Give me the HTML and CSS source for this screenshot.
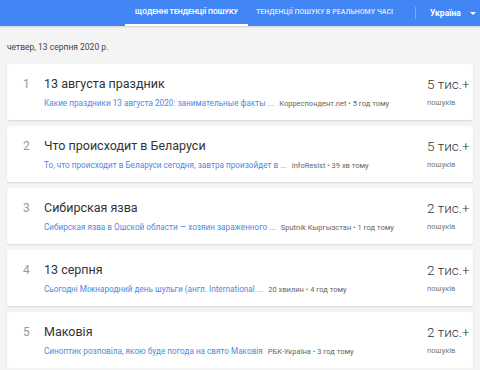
FILE: index.html
```html
<!DOCTYPE html>
<html lang="uk">
<head>
    <meta charset="UTF-8">
    <title>Тенденції пошуку</title>
    <link rel="stylesheet" href="styles.css">
</head>
<body>
    <div class="topbar">
        <div class="tab active">Щоденні тенденції пошуку</div>
        <div class="tab">Тенденції пошуку в реальному часі</div>
        <div class="divider"></div>
        <div class="country">Україна <span class="caret"></span></div>
    </div>

    <div class="date">четвер, 13 серпня 2020 р.</div>

    <div class="list">
        <div class="card">
            <div class="num">1</div>
            <div class="main">
                <div class="title">13 августа праздник</div>
                <div class="snippet"><span class="link">Какие праздники 13 августа 2020: занимательные факты ...</span> <span class="source">Корреспондент.net • 5 год тому</span></div>
            </div>
            <div class="count">
                <div class="value">5 тис.+</div>
                <div class="label">пошуків</div>
            </div>
        </div>
        <div class="card">
            <div class="num">2</div>
            <div class="main">
                <div class="title">Что происходит в Беларуси</div>
                <div class="snippet"><span class="link">То, что происходит в Беларуси сегодня, завтра произойдет в ...</span> <span class="source">InfoResist • 39 хв тому</span></div>
            </div>
            <div class="count">
                <div class="value">5 тис.+</div>
                <div class="label">пошуків</div>
            </div>
        </div>
        <div class="card">
            <div class="num">3</div>
            <div class="main">
                <div class="title">Сибирская язва</div>
                <div class="snippet"><span class="link">Сибирская язва в Ошской области — хозяин зараженного ...</span> <span class="source">Sputnik Кыргызстан • 1 год тому</span></div>
            </div>
            <div class="count">
                <div class="value">2 тис.+</div>
                <div class="label">пошуків</div>
            </div>
        </div>
        <div class="card">
            <div class="num">4</div>
            <div class="main">
                <div class="title">13 серпня</div>
                <div class="snippet"><span class="link">Сьогодні Міжнародний день шульги (англ. International ...</span> <span class="source">20 хвилин • 4 год тому</span></div>
            </div>
            <div class="count">
                <div class="value">2 тис.+</div>
                <div class="label">пошуків</div>
            </div>
        </div>
        <div class="card">
            <div class="num">5</div>
            <div class="main">
                <div class="title">Маковія</div>
                <div class="snippet"><span class="link">Синоптик розповіла, якою буде погода на свято Маковія</span> <span class="source">РБК-Україна • 3 год тому</span></div>
            </div>
            <div class="count">
                <div class="value">2 тис.+</div>
                <div class="label">пошуків</div>
            </div>
        </div>
    </div>
</body>
</html>
```

FILE: styles.css
```css
body {
    margin: 0;
    background: #f4f4f4;
    font-family: Roboto, "Noto Sans", sans-serif;
    color: #333;
}

.topbar {
    height: 26px;
    background: #4285f4;
    display: flex;
    align-items: stretch;
    padding-left: 125px;
    color: #fff;
    box-shadow: 0 1px 2px rgba(0, 0, 0, 0.15);
}

.tab {
    display: flex;
    align-items: center;
    justify-content: center;
    padding: 0 8px;
    font-size: 7px;
    font-weight: 700;
    text-transform: uppercase;
    color: rgba(255, 255, 255, 0.75);
    border-bottom: 2px solid transparent;
    box-sizing: border-box;
}

.tab.active {
    width: 123px;
    color: #fff;
    border-bottom-color: #fff;
}

.divider {
    width: 1px;
    margin: 7px 8px 7px 14px;
    background: rgba(255, 255, 255, 0.3);
}

.country {
    display: flex;
    align-items: center;
    gap: 9px;
    padding-left: 6px;
    font-size: 8.5px;
    font-weight: 700;
}

.caret {
    width: 0;
    height: 0;
    border-left: 3px solid transparent;
    border-right: 3px solid transparent;
    border-top: 3px solid #fff;
}

.date {
    padding: 16px 0 0 7px;
    height: 22px;
    font-size: 8.5px;
    color: #444;
}

.list {
    display: flex;
    flex-direction: column;
    gap: 6px;
    padding: 0 7px;
}

.card {
    display: flex;
    align-items: flex-start;
    background: #fff;
    padding: 12px 0 11px 16px;
    height: 33px;
    box-shadow: 0 1px 2px rgba(0, 0, 0, 0.12);
    border-radius: 2px;
}

.num {
    width: 21px;
    font-size: 12px;
    line-height: 16px;
    color: #999;
}

.main {
    flex: 1;
}

.title {
    font-size: 12.5px;
    line-height: 16px;
    color: #333;
}

.snippet {
    margin-top: 5px;
    line-height: 12px;
    font-size: 8.2px;
    white-space: nowrap;
}

.link {
    color: #5089e0;
    margin-right: 3px;
}

.source {
    color: #666;
    font-size: 7.5px;
}

.count {
    width: 46px;
}

.value {
    font-size: 13.5px;
    font-weight: 300;
    line-height: 16px;
    color: #333;
}

.label {
    margin-top: 5px;
    line-height: 12px;
    font-size: 7.5px;
    color: #777;
}
```
